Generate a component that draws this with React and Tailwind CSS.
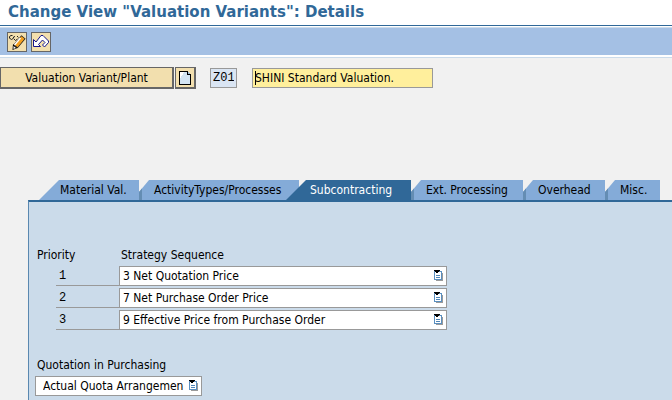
import React from "react";

const FONT = "font-['DejaVu_Sans_Condensed','DejaVu_Sans',sans-serif]";

function ListIcon({ className }) {
  return (
    <svg className={className} width="9" height="11" viewBox="0 0 9 11" shapeRendering="crispEdges" aria-hidden="true">
      <path d="M2 3h7v8H2z" fill="#9a9a9a" />
      <path d="M0 1h8v9H0z" fill="#5a8fc0" />
      <path d="M1 2h6v7H1z" fill="#fff" />
      <path d="M2 5h4v1H2zM2 7h4v1H2z" fill="#4f86b8" />
      <path d="M0 0h6v1H0zM1 1h4v1H1zM2 2h2v1H2z" fill="#000" />
    </svg>
  );
}

function EditIcon() {
  return (
    <svg width="18" height="18" viewBox="0 0 18 18" aria-hidden="true">
      <path d="M1.500 5.500v-2L3 2.500h1.500M5.500 5.500v-1.500L7 3.500M9 3l1.500 1.500" fill="none" stroke="#222" />
      <path d="M2 5.500l1.500 1L5 5.500M6 6l1.500 1.500L9.500 6" fill="none" stroke="#222" />
      <path d="M15.500 4L7.500 13.500" stroke="#222" strokeWidth="5.500" />
      <path d="M5 11l4.500 4L4.500 17z" fill="#000" />
      <path d="M15 4.500L8 13" stroke="#f5a01e" strokeWidth="4" />
      <path d="M12.500 5L6.500 12" stroke="#fff" strokeWidth="1.500" />
      <path d="M5.500 13l2.500 2-2.500 1z" fill="#fff" />
    </svg>
  );
}

function BackIcon() {
  return (
    <svg width="18" height="18" viewBox="0 0 18 18" aria-hidden="true">
      <path
        d="M1.500 6.500V13.500H8.500L6.500 11.500 10.500 7 13 9.500 10.500 12 12.500 14 16.500 9.500V8L12 3.500 11 2.500H9L4 9z"
        fill="#fff"
        stroke="#16168c"
      />
    </svg>
  );
}

function PageIcon() {
  return (
    <svg width="12" height="14" viewBox="0 0 12 14" shapeRendering="crispEdges" aria-hidden="true">
      <path d="M.5.5H8L11.500 4v9.500H.5z" fill="#d3e4f3" stroke="#000" />
      <path d="M1 1h4L1 8z" fill="#fff" />
      <path d="M8.500.5V3.500h3" fill="#9ab8d8" stroke="#000" />
    </svg>
  );
}

function Dropdown({ id, label, value, className, pad }) {
  return (
    <div className={`relative h-5 ${className}`}>
      <select
        id={id}
        aria-label={label}
        className={`block h-5 w-full appearance-none rounded-none border border-[#999] bg-white leading-4 text-black outline-none ${pad}`}
      >
        <option>{value}</option>
      </select>
      <ListIcon className="pointer-events-none absolute top-1 right-1" />
    </div>
  );
}

const tabs = [
  { name: "Material Val.", size: "w-[100px] pl-[21px] [clip-path:polygon(0_100%,20px_0,100%_0,100%_100%)]" },
  { name: "ActivityTypes/Processes", size: "w-[160px] pl-3", notch: true },
  { name: "Subcontracting", size: "-ml-[13px] w-[125px] pl-6 [clip-path:polygon(0_100%,20px_0,100%_0,100%_100%)]", active: true },
  { name: "Ext. Processing", size: "w-28 pl-3", notch: true },
  { name: "Overhead", size: "w-[82px] pl-3", notch: true },
  { name: "Misc.", size: "w-[55px] pl-3", notch: true },
];

function Tab({ name, size, notch, active }) {
  const edge = notch
    ? "border-l-3 border-[#648db3] [clip-path:polygon(0_12px,10px_0,100%_0,100%_100%,0_100%)]"
    : "";
  const tone = active ? "relative bg-[#306898] text-white" : "bg-[#84abd8] text-black";
  return (
    <button role="tab" aria-selected={!!active} className={`h-5 shrink-0 text-left whitespace-nowrap ${size} ${edge} ${tone}`}>
      {name}
    </button>
  );
}

const strategies = [
  "3 Net Quotation Price",
  "7 Net Purchase Order Price",
  "9 Effective Price from Purchase Order",
];

export default function App() {
  return (
    <div className={`flex min-h-screen flex-col overflow-hidden bg-[#f1f1f1] text-[12px] leading-4 text-black ${FONT}`}>
      <header className="border-b border-[#306898] bg-white px-2 pb-px">
        <h1 className="font-['DejaVu_Sans',sans-serif] text-[15px] leading-6 font-bold whitespace-nowrap text-[#306898]">
          Change View "Valuation Variants": Details
        </h1>
      </header>
      <div className="border-b border-[#cbdbea] bg-white pt-px pb-0.5">
        <div role="toolbar" className="flex h-7 items-center gap-1 border-t border-[#cbdbea] bg-[#a4c0e4] px-[7px]">
          <button aria-label="Display or change" className="size-5 border border-[#666] bg-[#f2dfae]"><EditIcon /></button>
          <button aria-label="Undo" className="size-5 border border-[#666] bg-[#f2dfae]"><BackIcon /></button>
        </div>
      </div>

      <div className="flex items-center pt-[9px]">
        <button className="h-[22px] w-[174px] border border-r-2 border-b-2 border-[#666] bg-[#f2dfae]">
          Valuation Variant/Plant
        </button>
        <button aria-label="Create" className="ml-px flex h-[22px] w-[21px] items-center justify-center border border-r-2 border-b-2 border-[#666] bg-[#f2dfae]">
          <PageIcon />
        </button>
        <input
          aria-label="Valuation variant"
          readOnly
          defaultValue="Z01"
          className="ml-[14px] h-5 w-[27px] border border-[#999] bg-[#dae5f3] px-0.5 font-['Liberation_Mono',monospace] outline-none"
        />
        <div className="relative ml-[15px]">
          <input
            aria-label="Description"
            defaultValue="SHINI Standard Valuation."
            className="block h-5 w-[181px] border border-[#999] bg-[#ffef9c] px-0.5 outline-none"
          />
          <span className="absolute top-[3px] left-[3px] h-[14px] w-px bg-black" />
        </div>
      </div>

      <main className="mt-[91px] ml-7 flex flex-1 flex-col">
        <div role="tablist" className="flex pl-[11px]">
          {tabs.map((tab) => (
            <Tab key={tab.name} {...tab} />
          ))}
        </div>
        <section className="flex-1 border-t-2 border-l border-t-[#306898] border-l-[#5a88b0] bg-[#cbdbea] pt-[45px]">
          <table className="ml-2 border-collapse">
            <thead>
              <tr className="text-left align-top">
                <th className="h-[19px] w-[82px] p-0 font-normal">Priority</th>
                <th className="h-[19px] p-0 pl-0.5 font-normal">Strategy Sequence</th>
              </tr>
            </thead>
            <tbody>
              {strategies.map((name, i) => (
                <tr key={name} className="align-top">
                  <td className="p-0 pb-0.5 pl-[19px]">
                    <div className="h-5 border-b border-[#999] pl-[3px] font-['Liberation_Mono',monospace] leading-5">{i + 1}</div>
                  </td>
                  <td className="p-0 pb-0.5">
                    <Dropdown label={`Strategy ${i + 1}`} value={name} className="w-[328px]" pad="pl-[3px]" />
                  </td>
                </tr>
              ))}
            </tbody>
          </table>
          <div className="mt-[25px] ml-2">
            <label htmlFor="quotation" className="block h-[19px]">Quotation in Purchasing</label>
            <Dropdown id="quotation" value="Actual Quota Arrangemen" className="-ml-0.5 w-[167px]" pad="pl-[7px]" />
          </div>
        </section>
      </main>
    </div>
  );
}
